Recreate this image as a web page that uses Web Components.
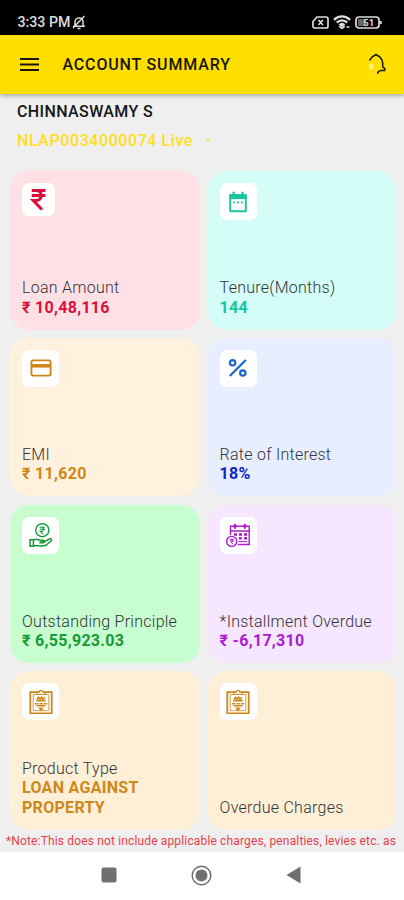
<!DOCTYPE html>
<html lang="en">
<head>
<meta charset="utf-8">
<meta name="viewport" content="width=device-width, initial-scale=1">
<title>Account Summary</title>
<style>
    html, body {
        margin: 0;
        height: 100%;
    }
    body {
        font-family: Roboto, "Noto Sans", sans-serif;
        overflow: hidden;
    }
</style>
</head>
<body>
<account-screen></account-screen>

<script>
const icons = {
    rupee: `<path d="M5.5 3.4h13.2M5.5 8.2h13.2M5.5 3.4h4.2c6.6 0 6.6 9.6 0 9.6H7l8.3 8.6" stroke-width="2.9"/>`,
    calendar: `<path d="M4.2 5.2h15.6v16H4.2z" stroke-width="1.9" stroke-linejoin="round"/><path d="M3.3 4.3h17.4v4.8H3.3z" fill="currentColor" stroke="none"/><path d="M7.6 1.8v4M16.4 1.8v4" stroke-width="2.2"/><path d="M7.2 12.3h2M11 12.3h2M14.8 12.3h2" stroke-width="1.8"/>`,
    card: `<rect x="2.4" y="4.4" width="19.2" height="15.2" rx="1.8" stroke-width="1.9"/><path d="M2.5 9.8h19" stroke-width="3.6"/>`,
    percent: `<circle cx="6.6" cy="6.8" r="2.7" stroke-width="2.2"/><circle cx="16.8" cy="17" r="2.7" stroke-width="2.2"/><path d="M19.8 4 3.8 20" stroke-width="2.2"/>`,
    hand: `<circle cx="13.3" cy="7.2" r="6.6" stroke-width="1.4"/><path d="M10.7 4.2h5.2M10.7 6.3h5.2M11 4.2h1.2c3 0 3 4.1 0 4.1h-1l3.2 3" stroke-width="1.1"/><path d="M1 16.7h3.4v6.6H1zM4.4 17.3c2-1.3 4-1.4 5.7-.1h4c1.8 0 1.8 2.6 0 2.6h-3.8M15.2 18.8l5.1-2.8c1.7-.6 3 .5 1.7 2l-5 4.2c-3.8 1.6-8 .4-12.6.4" stroke-width="1.5"/><path d="m11 18.6 2-1.4 2.6 1.6-2 1z" fill="currentColor" stroke="none"/>`,
    overdue: `<path d="M4.5 12V3.3h18.7v18.2H12M4.5 8h19" stroke-width="1.4"/><path d="M9 .8v5M18.8 .8v5M7 3.3h4M16.8 3.3h4" stroke-width="1.8"/><path d="M8 11.5h3M13 11.5h3M18 11.5h3M12.8 15.2h3M18 15.2h3" stroke-width="2.4"/><path d="M12.5 18.6h8.5" stroke-width="1"/><circle cx="5.7" cy="18.4" r="5" stroke-width="1.4"/><path d="M3.8 16.3h4M3.8 18h4M5 16.3c2.3 0 2.3 2.8 0 2.8l2 2" stroke-width="1"/>`,
    clipboard: `<path d="M1.3 2.1h21.4v21.4H1.3z" stroke-width="1.8"/><path d="M7.5 4.7H4.2v16h15.6v-16h-3.3" stroke-width=".8"/><path d="M7.8 4.5V2.2h2.4c.2-2.3 3.4-2.3 3.6 0h2.4v2.3z" fill="#fff" stroke-width="1.2"/><path d="M8 9.2 9.6 7.2l1.5 2 1.5-2 1.5 2 1.6-2M7.2 10.6h9.6" stroke-width="1.6"/><path d="M5.8 13.7h3.4M10.3 13.7h3.4M14.8 13.7h3.4M7.5 15.8h9" stroke-width="1.4"/><path d="M9.8 17.9h4.4L12 21z" fill="currentColor" stroke-width=".8"/>`
};

class StatusBar extends HTMLElement {
    connectedCallback() {
        this.attachShadow({ mode: 'open' });
        this.shadowRoot.innerHTML = `
            <style>
                :host {
                    display: flex;
                    align-items: center;
                    justify-content: space-between;
                    height: 35px;
                    box-sizing: border-box;
                    padding: 9px 21px 0 17.5px;
                    background: #000;
                    color: #ddd;
                }
                .left, .right { display: flex; align-items: center; }
                .left { font-size: 14.2px; font-weight: 500; gap: 2px; }
                .right { gap: 4px; }
                svg { display: block; fill: none; stroke: currentColor; }
            </style>
            <div class="left">
                <span>3:33 PM</span>
                <svg width="14" height="15" viewBox="0 0 14 15" stroke-width="1.5"><path d="M3 11V7c0-5.3 8-5.3 8 0v4M1 11.2h12M5.5 13.4h3M12.5 1 1 13"/></svg>
            </div>
            <div class="right">
                <svg width="17" height="13" viewBox="0 0 17 13" stroke-width="1.7"><path d="M5 1h9.2Q16 1 16 2.8v7.4q0 1.8-1.8 1.8H2.6Q1 12 1 10.2V5.5zM6.5 4l4.4 5M10.9 4 6.5 9"/></svg>
                <svg width="18" height="14" viewBox="0 0 18 14" stroke-width="2.3"><path d="M1 4.8c4.8-4.6 11.2-4.6 16 0M3.8 7.6c3-3 7.4-3 10.4 0M6.4 10.2c1.5-1.5 3.7-1.5 5.2 0"/><path d="m9 10.4 2 1.4-2 1.7-2-1.7zM13.5 12h3" stroke-width="1.7"/></svg>
                <svg width="28" height="13" viewBox="0 0 28 13"><rect x="1" y="1" width="23" height="11" rx="3" stroke-width="1.7"/><path d="M3 3h8v7H3z" fill="#666" stroke="none"/><path d="M25.7 5v3" stroke-width="2"/><text x="8.3" y="9.9" font-size="9.5" font-weight="700" fill="#ddd" stroke="none">51</text></svg>
            </div>
        `;
    }
}

class AppHeader extends HTMLElement {
    connectedCallback() {
        this.attachShadow({ mode: 'open' });
        this.shadowRoot.innerHTML = `
            <style>
                :host {
                    display: flex;
                    align-items: center;
                    height: 59px;
                    box-sizing: border-box;
                    padding: 0 17px 1px 20px;
                    background: #ffdf00;
                    color: #191500;
                    box-shadow: 0 1px 5px rgba(0, 0, 0, 0.4);
                    z-index: 1;
                }
                h1 {
                    flex: 1;
                    margin: 0 0 0 23.5px;
                    font-size: 16px;
                    font-weight: 500;
                    letter-spacing: 0.84px;
                }
                svg { display: block; fill: none; stroke: currentColor; }
            </style>
            <svg width="19" height="15" viewBox="0 0 19 15" stroke-width="1.9"><path d="M0 2h19M0 7.5h19M0 13h19"/></svg>
            <h1><slot></slot></h1>
            <svg width="20" height="24" viewBox="0 0 20 24" stroke-width="1.5"><path d="M2.5 8.5 5 5l4-2.5L13 5l2 3 .7 3v4l2 1.3v2.2H13M13 18.5l-2.2 1.8v1.5"/><rect x="2" y="11.5" width="4.5" height="6" rx="2" fill="#fff27a" stroke="none"/></svg>
        `;
    }
}

class SummaryCard extends HTMLElement {
    connectedCallback() {
        const size = this.getAttribute('box') || 37;
        const icon = this.getAttribute('icon-size') || 24;
        this.attachShadow({ mode: 'open' });
        this.shadowRoot.innerHTML = `
            <style>
                :host {
                    display: flex;
                    flex-direction: column;
                    justify-content: space-between;
                    align-items: flex-start;
                    box-sizing: border-box;
                    padding: 12px 12px 12.5px;
                    border-radius: 19px;
                    background: var(--bg);
                    color: var(--ink);
                }
                .icon {
                    display: flex;
                    align-items: center;
                    justify-content: center;
                    width: ${size}px;
                    height: ${size}px;
                    border-radius: 7px;
                    background: #fff;
                }
                svg { display: block; fill: none; stroke: currentColor; }
                .text { font-size: 16px; line-height: 19.5px; }
                .label { color: #333336; font-weight: 300; letter-spacing: 0.26px; white-space: nowrap; }
                .value { font-weight: 700; letter-spacing: 0.3px; }
            </style>
            <div class="icon"><svg width="${icon}" height="${icon}" viewBox="0 0 24 24">${icons[this.getAttribute('icon')]}</svg></div>
            <div class="text">
                <div class="label">${this.getAttribute('label')}</div>
                <div class="value"><slot></slot></div>
            </div>
        `;
    }
}

class NavBar extends HTMLElement {
    connectedCallback() {
        this.attachShadow({ mode: 'open' });
        this.shadowRoot.innerHTML = `
            <style>
                :host {
                    display: flex;
                    align-items: center;
                    justify-content: center;
                    gap: 74px;
                    height: 48px;
                    box-sizing: border-box;
                    padding: 0 2px 2px 0;
                    background: #fff;
                    color: #707070;
                    z-index: 1;
                }
                svg { display: block; fill: currentColor; }
            </style>
            <svg width="16" height="16"><rect x=".5" y=".5" width="15" height="15" rx="2"/></svg>
            <svg width="21" height="21"><circle cx="10.5" cy="10.5" r="9.3" fill="none" stroke="currentColor" stroke-width="1.5"/><circle cx="10.5" cy="10.5" r="6"/></svg>
            <svg width="15" height="18"><path d="M14.5.5v17L.5 9z"/></svg>
        `;
    }
}

class AccountScreen extends HTMLElement {
    connectedCallback() {
        this.attachShadow({ mode: 'open' });
        this.shadowRoot.innerHTML = `
            <style>
                :host {
                    display: flex;
                    flex-direction: column;
                    height: 900px;
                    background: #efefef;
                }
                main {
                    flex: 1;
                    min-height: 0;
                    overflow: hidden;
                    display: flex;
                    flex-direction: column;
                }
                .customer {
                    padding: 8px 17px 0;
                    font-size: 16px;
                    font-weight: 500;
                    line-height: 19px;
                    letter-spacing: 0.38px;
                    color: #161616;
                }
                .loan {
                    display: flex;
                    align-items: center;
                    gap: 11px;
                    padding: 10px 17px 0;
                    font-size: 16px;
                    font-weight: 500;
                    line-height: 19px;
                    letter-spacing: 0.58px;
                    color: #ffdd20;
                }
                .grid {
                    display: grid;
                    grid-template-columns: 190px 188.4px;
                    grid-auto-rows: 158.6px;
                    gap: 8.2px 7.6px;
                    padding: 21px 8px 0 10px;
                }
                .note {
                    padding: 4px 0 0 6px;
                    font-size: 12px;
                    line-height: 14px;
                    letter-spacing: 0.15px;
                    white-space: nowrap;
                    color: #e83f4c;
                }
            </style>
            <status-bar></status-bar>
            <app-header>ACCOUNT SUMMARY</app-header>
            <main>
                <div class="customer">CHINNASWAMY S</div>
                <div class="loan">
                    <span>NLAP0034000074 Live</span>
                    <svg width="8" height="4"><path d="M1 0h6L4 3z" fill="#eee75a"/></svg>
                </div>
                <div class="grid">
                    <summary-card icon="rupee" box="33" icon-size="25" label="Loan Amount" style="--bg:#ffe0e5;--ink:#d80f3b">₹ 10,48,116</summary-card>
                    <summary-card icon="calendar" label="Tenure(Months)" style="--bg:#d3fdf6;--ink:#16c79d">144</summary-card>
                    <summary-card icon="card" label="EMI" style="--bg:#fff1de;--ink:#ce8717">₹ 11,620</summary-card>
                    <summary-card icon="percent" label="Rate of Interest" style="--bg:#e7eeff;--ink:#1766d0"><span style="color:#1024c4">18%</span></summary-card>
                    <summary-card icon="hand" label="Outstanding Principle" style="--bg:#c8fdcf;--ink:#149b35">₹ 6,55,923.03</summary-card>
                    <summary-card icon="overdue" label="*Installment Overdue" style="--bg:#f6e6ff;--ink:#a91ad0">₹ -6,17,310</summary-card>
                    <summary-card icon="clipboard" label="Product Type" style="--bg:#ffefd6;--ink:#cd871a">LOAN AGAINST PROPERTY</summary-card>
                    <summary-card icon="clipboard" label="Overdue Charges" style="--bg:#ffefd6;--ink:#cd871a"></summary-card>
                </div>
                <div class="note">*Note:This does not include applicable charges, penalties, levies etc. as</div>
            </main>
            <nav-bar></nav-bar>
        `;
    }
}

customElements.define('status-bar', StatusBar);
customElements.define('app-header', AppHeader);
customElements.define('summary-card', SummaryCard);
customElements.define('nav-bar', NavBar);
customElements.define('account-screen', AccountScreen);
</script>
</body>
</html>
